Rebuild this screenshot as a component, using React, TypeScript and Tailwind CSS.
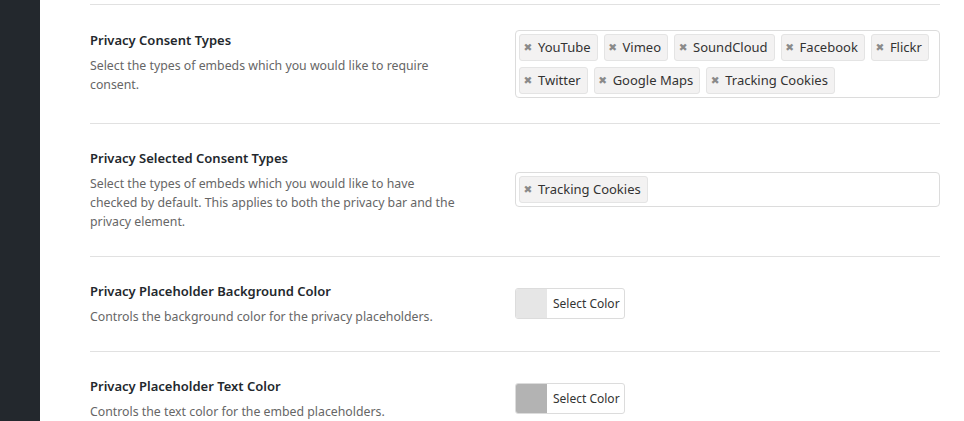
import React from "react";

const font = { fontFamily: '"Noto Sans", "Open Sans", sans-serif' };

function Tag({ label }: { label: string }) {
  return (
    <span className="flex h-[27px] items-center rounded-[3px] border border-[#e4e4e4] bg-[#f3f2f2] pl-[4px] pr-[6px] text-[13px] text-[#333]">
      <span
        className="mr-[6px] flex w-[8px] justify-center text-[10.5px] leading-none text-[#8a8a8a]"
        style={{ fontFamily: '"DejaVu Sans", sans-serif' }}
      >
        ✖
      </span>
      <span className="whitespace-nowrap">{label}</span>
    </span>
  );
}

function TagBox({ tags }: { tags: string[] }) {
  return (
    <div className="flex w-full flex-wrap gap-x-[6px] gap-y-[6px] rounded-[4px] border border-[#dcdcdc] bg-white p-[3px]">
      {tags.map((t) => (
        <Tag key={t} label={t} />
      ))}
    </div>
  );
}

function ColorPicker({ color }: { color: string }) {
  return (
    <div className="flex h-[31px] w-[110px] overflow-hidden rounded-[3px] border border-[#dcdcdc] bg-white">
      <div className={`w-[31px] ${color}`} />
      <div className="flex items-center whitespace-nowrap pl-[6px] text-[12px] text-[#333]">Select Color</div>
    </div>
  );
}

function Row({
  title,
  desc,
  children,
  top,
}: {
  title: string;
  desc: React.ReactNode;
  children: React.ReactNode;
  top?: boolean;
}) {
  return (
    <div className={`flex items-center border-t border-[#e1e1e1] ${top ? "py-[25px]" : "pt-[24px] pb-[25px]"}`}>
      <div className={`w-[425px] shrink-0 ${top ? "self-start" : ""}`}>
        <div className="whitespace-nowrap text-[13px] font-semibold leading-[20px] text-[#23282d]">{title}</div>
        <div className="mt-[6px] whitespace-nowrap text-[12.3px] leading-[19px] text-[#666]">{desc}</div>
      </div>
      <div className="flex-1">{children}</div>
    </div>
  );
}

export default function App() {
  return (
    <div className="flex h-[421px] overflow-hidden bg-white" style={font}>
      <div className="w-[40px] shrink-0 bg-[#23282d]" />
      <div className="flex-1 pl-[50px] pr-[24px]">
        <div className="h-[4px]" />
        <Row
          top
          title="Privacy Consent Types"
          desc={
            <>
              Select the types of embeds which you would like to require
              <br />
              consent.
            </>
          }
        >
          <TagBox
            tags={[
              "YouTube",
              "Vimeo",
              "SoundCloud",
              "Facebook",
              "Flickr",
              "Twitter",
              "Google Maps",
              "Tracking Cookies",
            ]}
          />
        </Row>
        <Row
          title="Privacy Selected Consent Types"
          desc={
            <>
              Select the types of embeds which you would like to have
              <br />
              checked by default. This applies to both the privacy bar and the
              <br />
              privacy element.
            </>
          }
        >
          <TagBox tags={["Tracking Cookies"]} />
        </Row>
        <Row
          title="Privacy Placeholder Background Color"
          desc="Controls the background color for the privacy placeholders."
        >
          <ColorPicker color="bg-[#e6e6e6]" />
        </Row>
        <Row
          title="Privacy Placeholder Text Color"
          desc="Controls the text color for the embed placeholders."
        >
          <ColorPicker color="bg-[#b3b3b3]" />
        </Row>
      </div>
    </div>
  );
}
